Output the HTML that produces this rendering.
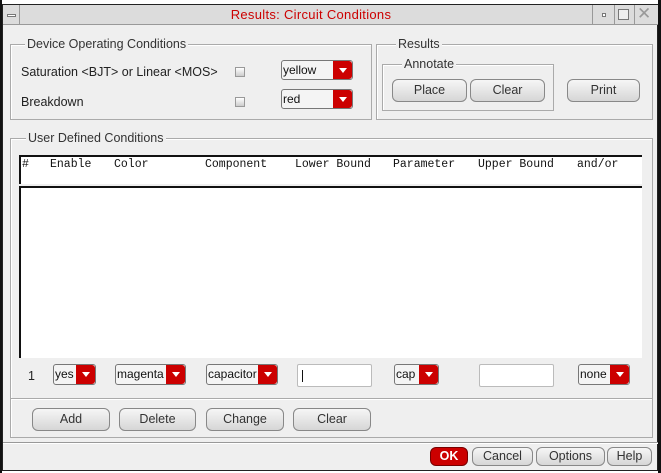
<!DOCTYPE html>
<html><head><style>
*{box-sizing:border-box;margin:0;padding:0}
body{width:661px;height:473px;background:#fff;position:relative;overflow:hidden;font-family:"Liberation Sans",sans-serif;font-size:12.5px;color:#222}
.a{position:absolute}
.grp{position:absolute;border:1px solid #aaa;box-shadow:inset 1px 1px 0 #fff}
.lbl{position:absolute;background:#efefef;padding:0 2px;font-size:12.5px;color:#333}
.btn{position:absolute;border:1px solid #888;border-radius:6px;background:linear-gradient(#f6f6f6,#d6d6d6);text-align:center;font-size:12.5px;color:#333}
.dd{position:absolute;border:1px solid #777;border-radius:3px;background:#f4f4f4;font-size:12px;color:#111;padding-left:1px;overflow:hidden;white-space:nowrap}
.dd i{position:absolute;right:0;top:0;bottom:0;width:19px;background:#c00;border-radius:0 3px 3px 0}
.dd i:after{content:"";position:absolute;left:6px;top:7px;border-left:4px solid transparent;border-right:4px solid transparent;border-top:5px solid #fff}
.cb{position:absolute;width:10px;height:10px;border:1px solid #999;background:linear-gradient(#fff,#ccc)}
.mono{font-family:"Liberation Mono",monospace;font-size:11.5px;position:absolute;top:158px;color:#111}
.tf{position:absolute;background:#fff;border:1px solid #bbb;border-radius:2px}
</style></head><body>
<div class="a" style="left:0;top:0;width:661px;height:4px;background:#fff"></div>
<div class="a" style="left:2px;top:4px;width:656px;height:467px;background:#efefef;border:1px solid #222"></div>
<div class="a" style="left:658px;top:0;width:3px;height:473px;background:#111"></div>
<div class="a" style="left:0;top:0;width:2px;height:473px;background:#111"></div>
<!-- title bar -->
<div class="a" style="left:3px;top:5px;width:655px;height:20px;background:#dcdcdc;border-bottom:1px solid #999"></div>
<div class="a" style="left:3px;top:5px;width:17px;height:20px;border-right:1px solid #999"></div>
<div class="a" style="left:7px;top:14px;width:9px;height:3px;border:1px solid #777;background:#fff"></div>
<div class="a" style="left:20px;top:7px;width:582px;text-align:center;color:#c00;font-size:13px;letter-spacing:0.3px">Results: Circuit Conditions</div>
<div class="a" style="left:592px;top:5px;width:1px;height:20px;background:#999"></div>
<div class="a" style="left:602px;top:13px;width:4px;height:4px;border:1px solid #777;background:#fff"></div>
<div class="a" style="left:614px;top:5px;width:1px;height:20px;background:#999"></div>
<div class="a" style="left:618px;top:9px;width:11px;height:11px;border:1px solid #777;background:#eee"></div>
<div class="a" style="left:634px;top:5px;width:1px;height:20px;background:#999"></div>
<div class="a" style="left:637px;top:4px;font-size:17px;color:#999;font-weight:100">✕</div>

<!-- device operating -->
<div class="grp" style="left:10px;top:44px;width:362px;height:76px"></div>
<div class="lbl" style="left:25px;top:37px">Device Operating Conditions</div>
<div class="a" style="left:21px;top:65px">Saturation &lt;BJT&gt; or Linear &lt;MOS&gt;</div>
<div class="a" style="left:21px;top:95px">Breakdown</div>
<div class="cb" style="left:235px;top:67px"></div>
<div class="cb" style="left:235px;top:97px"></div>
<div class="dd" style="left:281px;top:60px;width:72px;height:20px;line-height:18px">yellow<i></i></div>
<div class="dd" style="left:281px;top:89px;width:72px;height:20px;line-height:18px">red<i></i></div>

<!-- results -->
<div class="grp" style="left:376px;top:44px;width:277px;height:76px"></div>
<div class="lbl" style="left:396px;top:37px">Results</div>
<div class="grp" style="left:382px;top:64px;width:172px;height:47px"></div>
<div class="lbl" style="left:402px;top:57px">Annotate</div>
<div class="btn" style="left:392px;top:79px;width:75px;height:23px;line-height:21px">Place</div>
<div class="btn" style="left:470px;top:79px;width:75px;height:23px;line-height:21px">Clear</div>
<div class="btn" style="left:567px;top:79px;width:73px;height:23px;line-height:21px">Print</div>

<!-- user defined -->
<div class="grp" style="left:10px;top:138px;width:643px;height:300px"></div>
<div class="lbl" style="left:26px;top:131px">User Defined Conditions</div>
<div class="a" style="left:19px;top:155px;width:623px;height:29px;background:#fff;border-top:2px solid #111;border-left:2px solid #111"></div>
<div class="mono" style="left:22px">#</div>
<div class="mono" style="left:50px">Enable</div>
<div class="mono" style="left:114px">Color</div>
<div class="mono" style="left:205px">Component</div>
<div class="mono" style="left:295px">Lower Bound</div>
<div class="mono" style="left:393px">Parameter</div>
<div class="mono" style="left:478px">Upper Bound</div>
<div class="mono" style="left:577px">and/or</div>
<div class="a" style="left:19px;top:186px;width:623px;height:172px;background:#fff;border-top:2px solid #111;border-left:2px solid #111"></div>
<div class="a" style="left:28px;top:369px">1</div>
<div class="dd" style="left:53px;top:364px;width:43px;height:21px;line-height:19px">yes<i></i></div>
<div class="dd" style="left:115px;top:364px;width:71px;height:21px;line-height:19px">magenta<i></i></div>
<div class="dd" style="left:206px;top:364px;width:72px;height:21px;line-height:19px">capacitor<i></i></div>
<div class="tf" style="left:297px;top:364px;width:75px;height:23px"><div class="a" style="left:4px;top:5px;width:1px;height:12px;background:#111"></div></div>
<div class="dd" style="left:394px;top:364px;width:45px;height:21px;line-height:19px">cap<i></i></div>
<div class="tf" style="left:479px;top:364px;width:75px;height:23px"></div>
<div class="dd" style="left:578px;top:364px;width:52px;height:21px;line-height:19px">none<i></i></div>
<div class="a" style="left:11px;top:398px;width:641px;height:1px;background:#aaa;box-shadow:0 1px 0 #fff"></div>
<div class="btn" style="left:32px;top:408px;width:78px;height:23px;line-height:21px">Add</div>
<div class="btn" style="left:119px;top:408px;width:77px;height:23px;line-height:21px">Delete</div>
<div class="btn" style="left:206px;top:408px;width:78px;height:23px;line-height:21px">Change</div>
<div class="btn" style="left:293px;top:408px;width:78px;height:23px;line-height:21px">Clear</div>

<!-- bottom -->
<div class="a" style="left:3px;top:442px;width:655px;height:1px;background:#999;box-shadow:0 1px 0 #fff"></div>
<div class="btn" style="left:430px;top:447px;width:38px;height:19px;line-height:17px;background:#c00;color:#fff;font-weight:bold;border-color:#700">OK</div>
<div class="btn" style="left:472px;top:447px;width:61px;height:19px;line-height:17px">Cancel</div>
<div class="btn" style="left:536px;top:447px;width:69px;height:19px;line-height:17px">Options</div>
<div class="btn" style="left:607px;top:447px;width:45px;height:19px;line-height:17px">Help</div>
</body></html>
